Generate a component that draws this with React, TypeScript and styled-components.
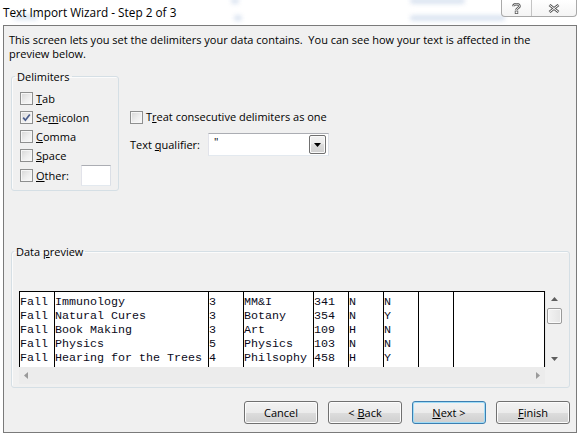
import React from "react";
import styled, { createGlobalStyle } from "styled-components";

const UI = `"Open Sans", "Noto Sans", "Liberation Sans", sans-serif`;
const MONO = `"Liberation Mono", "DejaVu Sans Mono", monospace`;
const FS = "11px";

const GlobalStyle = createGlobalStyle`
  html, body { margin: 0; padding: 0; background: #ffffff; }
  body { font-family: ${UI}; font-size: ${FS}; color: #000; }
  * { box-sizing: border-box; }
`;

const Window = styled.div`
  width: 583px;
  height: 437px;
  overflow: hidden;
  background: #ffffff;
  display: flex;
  flex-direction: column;
`;

const TitleBar = styled.div`
  position: relative;
  height: 25px;
  flex: none;
  padding: 4px 0 0 3px;
  font-size: 11.8px;
  line-height: 16px;
  color: #000;
`;

const Backdrop = styled.span<{ $x: number; $y: number; $w: number }>`
  position: absolute;
  left: ${(p) => p.$x}px;
  top: ${(p) => p.$y}px;
  width: ${(p) => p.$w}px;
  height: 6px;
  border-radius: 3px;
  background: #d3deee;
  filter: blur(2px);
  opacity: 0.8;
`;

const TitleText = styled.span`
  position: relative;
`;

const CaptionGroup = styled.div`
  position: absolute;
  top: 0;
  right: 6px;
  height: 17px;
  display: flex;
  border: 1px solid #a9a9a9;
  border-top: none;
  border-radius: 0 0 4px 4px;
  background: linear-gradient(#ffffff, #f4f4f4);
  overflow: hidden;
`;

const CaptionButton = styled.div<{ $w: number }>`
  width: ${(p) => p.$w}px;
  height: 100%;
  display: flex;
  align-items: center;
  justify-content: center;
  & + & {
    border-left: 1px solid #c4c4c4;
  }
`;

const Body = styled.div`
  margin: 0 6px 0 3px;
  height: 408px;
  flex: none;
  border: 1px solid #7a7a7a;
  background: #f0f0f0;
  display: flex;
  flex-direction: column;
`;

const Intro = styled.p`
  margin: 7px 0 0 5px;
  font-size: ${FS};
  line-height: 14px;
  white-space: nowrap;
`;

const OptionsRow = styled.div`
  display: flex;
  align-items: flex-start;
  margin: 9px 0 0 7px;
`;

const Group = styled.fieldset<{ $w: number }>`
  margin: 0;
  width: ${(p) => p.$w}px;
  border: 1px solid #d5dfe5;
  border-radius: 3px;
  box-shadow: inset 1px 1px 0 #fbfbfb;
  min-width: 0;
`;

const DelimGroup = styled(Group)`
  padding: 6px 0 4px 8px;
`;

const PreviewGroup = styled(Group)`
  margin: 54px 0 0 7px;
  padding: 33px 6px 3px 7px;
`;

const Legend = styled.legend`
  padding: 0 2px;
  margin-left: -5px;
  font-size: ${FS};
  line-height: 13px;
`;

const CheckRow = styled.label<{ $h?: number }>`
  display: flex;
  align-items: center;
  gap: 3px;
  height: ${(p) => p.$h ?? 19}px;
  font-size: ${FS};
  line-height: 14px;
`;

const Box = styled.span`
  width: 13px;
  height: 13px;
  flex: none;
  border: 1px solid #8e8f8f;
  background: linear-gradient(135deg, #d6d6d6 0%, #eeeeee 55%, #fafafa 100%);
  box-shadow: inset 0 0 0 1px #f6f6f6;
  display: flex;
  align-items: center;
  justify-content: center;
`;

const Key = styled.span`
  text-decoration: underline;
  text-underline-offset: 1px;
`;

const SmallInput = styled.span`
  width: 30px;
  height: 21px;
  margin-left: auto;
  margin-right: 7px;
  background: #fff;
  border: 1px solid #abadb3;
  border-color: #abadb3 #dbdfe6 #e3e9ef #e2e3ea;
`;

const RightCol = styled.div`
  display: flex;
  flex-direction: column;
  margin: 39px 0 0 11px;
`;

const QualifierRow = styled.div`
  display: flex;
  align-items: center;
  margin-top: 8px;
`;

const QualLabel = styled.span`
  width: 78px;
  font-size: ${FS};
`;

const Combo = styled.div`
  width: 121px;
  height: 23px;
  background: #fff;
  border: 1px solid #abadb3;
  border-color: #abadb3 #dbdfe6 #e3e9ef #e2e3ea;
  display: flex;
  align-items: stretch;
  padding: 1px 2px 1px 5px;
`;

const ComboValue = styled.span`
  flex: 1;
  font-size: ${FS};
  line-height: 13px;
  color: #000;
`;

const ComboButton = styled.span`
  width: 17px;
  border: 1px solid #707070;
  border-radius: 2px;
  background: linear-gradient(#f2f2f2 0%, #ebebeb 50%, #dddddd 50%, #cfcfcf 100%);
  box-shadow: inset 0 0 0 1px #fafafa;
  display: flex;
  align-items: center;
  justify-content: center;
`;

const GridFrame = styled.div`
  display: grid;
  grid-template-columns: 526px 17px;
  grid-template-rows: 76px 17px;
`;

const Viewport = styled.div`
  background: #fff;
  border-top: 1px solid #000;
  display: flex;
  overflow: hidden;
`;

const Column = styled.div<{ $chars?: number; $last?: boolean }>`
  ${(p) => (p.$chars ? `width: ${p.$chars * 7}px;` : "flex: 1;")}
  flex-shrink: 0;
  border-left: 1px solid #000;
  ${(p) => (p.$last ? "border-right: 1px solid #000;" : "")}
  padding-top: 3px;
  font-family: ${MONO};
  font-size: 11.67px;
  line-height: 14px;
  white-space: pre;
  color: #0a0a1a;
  overflow: hidden;
`;

const Cell = styled.div`
  height: 14px;
`;

const VScroll = styled.div`
  background: #f0f0f0;
  border-left: 1px solid #e6e6e6;
  display: flex;
  flex-direction: column;
  align-items: center;
`;

const HScroll = styled.div`
  background: #ececec;
  display: flex;
  align-items: center;
  justify-content: space-between;
  padding: 0 5px;
`;

const Corner = styled.div`
  background: #f0f0f0;
`;

const Arrow = styled.span<{ $h: number }>`
  height: ${(p) => p.$h}px;
  display: flex;
  align-items: center;
  justify-content: center;
`;

const Thumb = styled.span`
  width: 15px;
  height: 16px;
  margin-top: 1px;
  border: 1px solid #9a9a9a;
  border-radius: 2px;
  background: linear-gradient(90deg, #f3f3f3, #e4e4e4);
  box-shadow: inset 0 0 0 1px #fbfbfb;
`;

const ButtonRow = styled.div`
  display: flex;
  justify-content: flex-end;
  gap: 10px;
  margin: 13px 6px 0 0;
`;

const Button = styled.button<{ $default?: boolean }>`
  width: 74px;
  height: 23px;
  padding: 0;
  font-family: ${UI};
  font-size: ${FS};
  color: #000;
  border: 1px solid ${(p) => (p.$default ? "#3c7fb1" : "#707070")};
  border-radius: 3px;
  background: linear-gradient(#f2f2f2 0%, #ebebeb 50%, #dddddd 50%, #cfcfcf 100%);
  box-shadow: inset 0 0 0 1px ${(p) => (p.$default ? "#9fdcf7" : "#fcfcfc")};
`;

const Check = () => (
  <svg width="9" height="9" viewBox="0 0 9 9">
    <path d="M1.2 4.6 L3.4 7.2 L7.8 1.4" fill="none" stroke="#4a5d8c" strokeWidth="1.7" />
  </svg>
);

const CheckBox = ({ checked }: { checked?: boolean }) => <Box>{checked ? <Check /> : null}</Box>;

const Tri = ({ dir, color }: { dir: "up" | "down" | "left" | "right"; color: string }) => {
  const pts =
    dir === "up"
      ? "0,4 7,4 3.5,0"
      : dir === "down"
      ? "0,0 7,0 3.5,4"
      : dir === "left"
      ? "4,0 4,7 0,3.5"
      : "0,0 0,7 4,3.5";
  const w = dir === "up" || dir === "down" ? 7 : 4;
  const h = dir === "up" || dir === "down" ? 4 : 7;
  return (
    <svg width={w} height={h} viewBox={`0 0 ${w} ${h}`}>
      <polygon points={pts} fill={color} />
    </svg>
  );
};

const rows = [
  ["Fall", "Immunology", "3", "MM&I", "341", "N", "N"],
  ["Fall", "Natural Cures", "3", "Botany", "354", "N", "Y"],
  ["Fall", "Book Making", "3", "Art", "109", "H", "N"],
  ["Fall", "Physics", "5", "Physics", "103", "N", "N"],
  ["Fall", "Hearing for the Trees", "4", "Philsophy", "458", "H", "Y"],
];
const widths = [5, 22, 5, 10, 5, 5, 5, 5];

export default function App() {
  return (
    <>
      <GlobalStyle />
      <Window>
        <TitleBar>
          <Backdrop $x={14} $y={14} $w={24} />
          <Backdrop $x={231} $y={-2} $w={8} />
          <Backdrop $x={234} $y={15} $w={8} />
          <Backdrop $x={410} $y={-2} $w={55} />
          <Backdrop $x={410} $y={15} $w={95} />
          <TitleText>Text Import Wizard - Step 2 of 3</TitleText>
          <CaptionGroup>
            <CaptionButton $w={29}>
              <svg width="9" height="11" viewBox="0 0 9 11">
                <path
                  d="M1.5 3.2 C1.5 0.5 7.5 0.5 7.5 3.2 C7.5 5 4.5 5 4.5 7"
                  fill="none"
                  stroke="#5a5a5a"
                  strokeWidth="2.6"
                />
                <path
                  d="M1.5 3.2 C1.5 0.5 7.5 0.5 7.5 3.2 C7.5 5 4.5 5 4.5 7"
                  fill="none"
                  stroke="#ffffff"
                  strokeWidth="0.9"
                />
                <rect x="3.2" y="8" width="2.6" height="2.6" fill="#fff" stroke="#5a5a5a" strokeWidth="0.8" />
              </svg>
            </CaptionButton>
            <CaptionButton $w={45}>
              <svg width="12" height="9" viewBox="0 0 12 9">
                <path d="M1.5 1 L10.5 8 M10.5 1 L1.5 8" fill="none" stroke="#5a5a5a" strokeWidth="2.8" />
                <path d="M1.5 1 L10.5 8 M10.5 1 L1.5 8" fill="none" stroke="#ffffff" strokeWidth="1" />
              </svg>
            </CaptionButton>
          </CaptionGroup>
        </TitleBar>
        <Body>
          <Intro>
            This screen lets you set the delimiters your data contains.&nbsp; You can see how your text is affected in the
            <br />
            preview below.
          </Intro>
          <OptionsRow>
            <DelimGroup $w={108}>
              <Legend>Delimiters</Legend>
              <CheckRow>
                <CheckBox />
                <span>
                  <Key>T</Key>ab
                </span>
              </CheckRow>
              <CheckRow>
                <CheckBox checked />
                <span>
                  Se<Key>m</Key>icolon
                </span>
              </CheckRow>
              <CheckRow>
                <CheckBox />
                <span>
                  <Key>C</Key>omma
                </span>
              </CheckRow>
              <CheckRow>
                <CheckBox />
                <span>
                  <Key>S</Key>pace
                </span>
              </CheckRow>
              <CheckRow $h={21}>
                <CheckBox />
                <span>
                  <Key>O</Key>ther:
                </span>
                <SmallInput />
              </CheckRow>
            </DelimGroup>
            <RightCol>
              <CheckRow $h={16}>
                <CheckBox />
                <span>
                  T<Key>r</Key>eat consecutive delimiters as one
                </span>
              </CheckRow>
              <QualifierRow>
                <QualLabel>
                  Text <Key>q</Key>ualifier:
                </QualLabel>
                <Combo>
                  <ComboValue>"</ComboValue>
                  <ComboButton>
                    <Tri dir="down" color="#000" />
                  </ComboButton>
                </Combo>
              </QualifierRow>
            </RightCol>
          </OptionsRow>
          <PreviewGroup $w={559}>
            <Legend>
              Data <Key>p</Key>review
            </Legend>
            <GridFrame>
              <Viewport>
                {widths.map((w, ci) => (
                  <Column key={ci} $chars={w}>
                    {rows.map((r, ri) => (
                      <Cell key={ri}>{r[ci] ?? ""}</Cell>
                    ))}
                  </Column>
                ))}
                <Column $last />
              </Viewport>
              <VScroll>
                <Arrow $h={16}>
                  <Tri dir="up" color="#5e5e5e" />
                </Arrow>
                <Thumb />
                <span style={{ flex: 1 }} />
                <Arrow $h={17}>
                  <Tri dir="down" color="#5e5e5e" />
                </Arrow>
              </VScroll>
              <HScroll>
                <Tri dir="left" color="#9a9a9a" />
                <Tri dir="right" color="#9a9a9a" />
              </HScroll>
              <Corner />
            </GridFrame>
          </PreviewGroup>
          <ButtonRow>
            <Button>Cancel</Button>
            <Button>
              &lt; <Key>B</Key>ack
            </Button>
            <Button $default>
              <Key>N</Key>ext &gt;
            </Button>
            <Button>
              <Key>F</Key>inish
            </Button>
          </ButtonRow>
        </Body>
      </Window>
    </>
  );
}
